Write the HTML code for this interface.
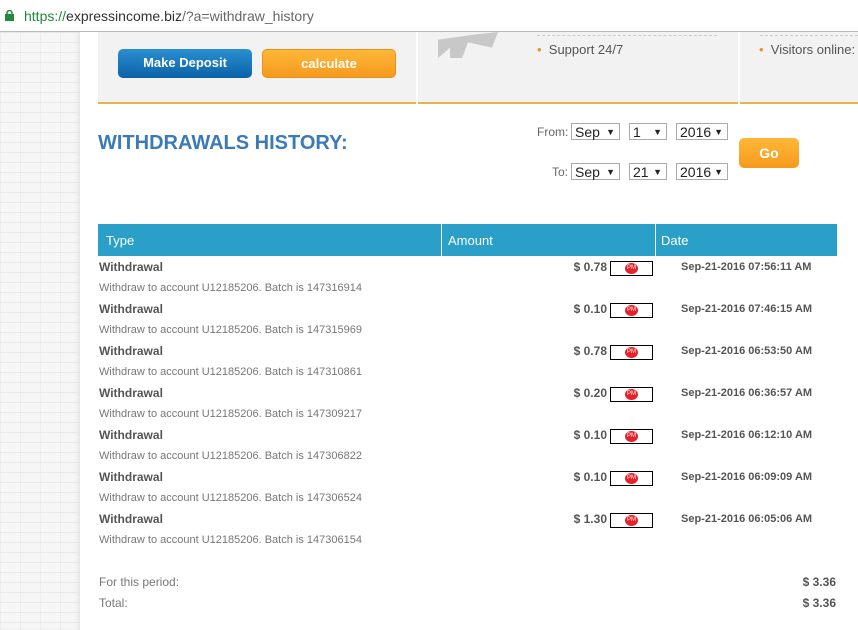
<!DOCTYPE html>
<html><head><style>
body{margin:0;width:858px;height:630px;overflow:hidden;background:#fff;font-family:"Liberation Sans",Arial,sans-serif;position:relative}
.a{position:absolute}
.url{left:0;top:0;width:858px;height:31px;border-bottom:1px solid #bbb;background:#fff}
.brick{left:0;top:32px;width:80px;height:598px;background-color:#f6f6f6;background-image:linear-gradient(#e9e9e9 1px,transparent 1px),linear-gradient(90deg,#ececec 1px,transparent 1px);background-size:20px 10px;box-shadow:inset -4px 0 6px -3px #ddd}
.btn{border-radius:5px;color:#fff;font-weight:bold;font-size:13px;text-align:center;line-height:28px}
.sel{border:1px solid #aaa;height:17px;font-size:14px;line-height:17px;color:#222;padding-left:3px;box-sizing:border-box}
.sel span{position:absolute;right:4px;top:0;font-size:9px}
.t{font-size:12px;font-weight:bold;color:#555}
.s{font-size:11px;color:#777}
.pm{width:43px;height:15px;border:1px solid #000;box-sizing:border-box}
.pm i{position:absolute;left:14px;top:1px;width:13px;height:11px;border-radius:50%;background:#e8202a;color:#fff;font-size:6px;font-style:normal;text-align:center;line-height:11px}
</style></head><body>
<div class="a url"></div>
<svg class="a" style="left:5px;top:10px" width="9" height="11"><rect x="0" y="4" width="9" height="7" fill="#1e8a3a"/><path d="M2 5V3a2.5 2.5 0 0 1 5 0v2" fill="none" stroke="#1e8a3a" stroke-width="1.5"/></svg>
<div class="a" style="left:24px;top:8px;font-size:14px;color:#666"><span style="color:#1e8a3a">https://</span><span style="color:#333">expressincome.biz</span>/?a=withdraw_history</div>
<div class="a brick"></div>
<div class="a" style="left:98px;top:32px;width:760px;height:70px;background:#f2f2f2;border-bottom:2px solid #e8b44a"></div>
<div class="a" style="left:416px;top:32px;width:2px;height:72px;background:#fff"></div>
<div class="a" style="left:738px;top:32px;width:2px;height:72px;background:#fff"></div>
<div class="a" style="left:438px;top:32px;width:60px;height:26px;background:#c8c8c8;clip-path:polygon(0 30%,60% 10%,100% 0,90% 60%,50% 40%,40% 100%,20% 100%,20% 60%,0 100%)"></div>
<div class="a" style="left:537px;top:35px;width:180px;border-top:1px dashed #ccc"></div>
<div class="a" style="left:760px;top:35px;width:98px;border-top:1px dashed #ccc"></div>
<div class="a" style="left:537px;top:42px;font-size:13px;color:#555"><span style="color:#e8902a">•</span>&nbsp; Support 24/7</div>
<div class="a" style="left:759px;top:42px;font-size:13px;color:#555"><span style="color:#e8902a">•</span>&nbsp; Visitors online:</div>
<div class="a btn" style="left:118px;top:49px;width:134px;height:29px;background:linear-gradient(#2a8fd0,#0b62a8)">Make Deposit</div>
<div class="a btn" style="left:262px;top:49px;width:134px;height:29px;background:linear-gradient(#ffb739,#f59a1d);border:1px solid #e8901c;box-sizing:border-box;line-height:27px">calculate</div>
<div class="a" style="left:98px;top:132px;font-size:20px;font-weight:bold;color:#3a7ab8">WITHDRAWALS HISTORY:</div>
<div class="a" style="left:537px;top:125px;font-size:12px;color:#666">From:</div>
<div class="a" style="left:552px;top:165px;font-size:12px;color:#666">To:</div>
<div class="a sel" style="left:571px;top:123px;width:49px">Sep<span>▼</span></div>
<div class="a sel" style="left:629px;top:123px;width:38px">1<span>▼</span></div>
<div class="a sel" style="left:676px;top:123px;width:52px">2016<span>▼</span></div>
<div class="a sel" style="left:571px;top:163px;width:49px">Sep<span>▼</span></div>
<div class="a sel" style="left:629px;top:163px;width:38px">21<span>▼</span></div>
<div class="a sel" style="left:676px;top:163px;width:52px">2016<span>▼</span></div>
<div class="a btn" style="left:739px;top:138px;width:60px;height:30px;line-height:30px;background:linear-gradient(#ffb739,#f59a1d);font-size:14px">Go</div>
<div class="a" style="left:98px;top:224px;width:739px;height:32px;background:#2aa0c8"></div>
<div class="a" style="left:441px;top:224px;width:1px;height:32px;background:#fff"></div>
<div class="a" style="left:655px;top:224px;width:1px;height:32px;background:#fff"></div>
<div class="a" style="left:106px;top:233px;font-size:13px;color:#fff">Type</div>
<div class="a" style="left:448px;top:233px;font-size:13px;color:#fff">Amount</div>
<div class="a" style="left:661px;top:233px;font-size:13px;color:#fff">Date</div>
<div id="rows"></div>
<script>
var d=[["0.78","07:56:11","147316914"],["0.10","07:46:15","147315969"],["0.78","06:53:50","147310861"],["0.20","06:36:57","147309217"],["0.10","06:12:10","147306822"],["0.10","06:09:09","147306524"],["1.30","06:05:06","147306154"]],h="";
d.forEach(function(r,i){var y=260+i*42;
h+='<div class="a t" style="left:99px;top:'+y+'px">Withdrawal</div>'+
'<div class="a t" style="right:251px;top:'+y+'px">$ '+r[0]+'</div>'+
'<div class="a pm" style="left:610px;top:'+(y+1)+'px"><i>PM</i></div>'+
'<div class="a t" style="left:681px;top:'+(y+1)+'px;font-size:11px">Sep-21-2016 '+r[1]+' AM</div>'+
'<div class="a s" style="left:99px;top:'+(y+22)+'px">Withdraw to account U12185206. Batch is '+r[2]+'</div>';});
document.getElementById("rows").innerHTML=h;
</script>
<div class="a s" style="left:99px;top:575px;font-size:12px">For this period:</div>
<div class="a s" style="left:99px;top:596px;font-size:12px">Total:</div>
<div class="a t" style="right:22px;top:575px">$ 3.36</div>
<div class="a t" style="right:22px;top:596px">$ 3.36</div>
</body></html>
